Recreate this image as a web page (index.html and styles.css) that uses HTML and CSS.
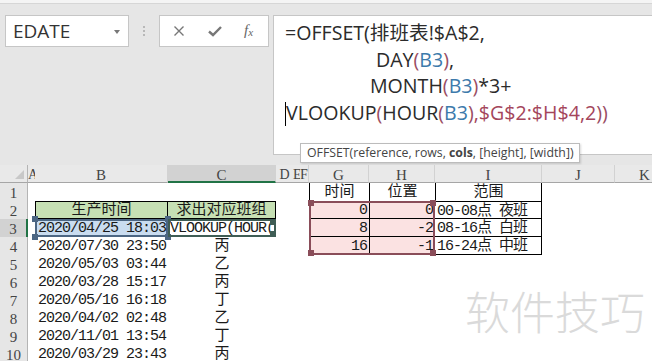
FILE: index.html
```html
<html>
<head>
    <link rel="stylesheet" href="styles.css">
</head>
<body>
    <div class="ribbon-edge"></div>
    <div class="bar">
        <div class="namebox">EDATE<span class="drop"></span></div>
        <div class="grip"><i></i><i></i><i></i></div>
        <div class="buttons">
            <svg class="btn" width="14" height="14" viewBox="0 0 14 14"><path d="M2.5 2.5 L11.5 11.5 M11.5 2.5 L2.5 11.5" stroke="#777" stroke-width="1.4" fill="none"/></svg>
            <svg class="btn" width="16" height="14" viewBox="0 0 16 14"><path d="M2 7.5 L6 11 L14 3" stroke="#777" stroke-width="2.4" fill="none"/></svg>
            <span class="fx">f<sub>x</sub></span>
        </div>
        <div class="formula">
            <div class="line">=OFFSET(排班表!$A$2,</div>
            <div class="line ind2">DAY<span class="tok-paren">(</span><span class="tok-cell">B3</span><span class="tok-paren">)</span>,</div>
            <div class="line ind3">MONTH<span class="tok-paren">(</span><span class="tok-cell">B3</span><span class="tok-paren">)</span>*3+</div>
            <div class="line"><span class="caret"></span>VLOOKUP<span class="tok-paren">(</span>HOUR<span class="tok-paren">(</span><span class="tok-cell">B3</span><span class="tok-paren">)</span><span class="tok-range">,$G$2:$H$4,2</span><span class="tok-paren">))</span></div>
        </div>
        <div class="tip">OFFSET(reference, rows, <b>cols</b>, [height], [width])</div>
    </div>

    <div class="sheet">
        <div class="row head">
            <div class="rh corner"><span class="tri"></span></div>
            <div class="hc a">A</div>
            <div class="hc b">B</div>
            <div class="hc c sel">C</div>
            <div class="hc d">D</div>
            <div class="hc e">E</div>
            <div class="hc f">F</div>
            <div class="hc g">G</div>
            <div class="hc h">H</div>
            <div class="hc i">I</div>
            <div class="hc j">J</div>
            <div class="hc k">K</div>
        </div>
        <div class="row">
            <div class="rh">1</div>
            <div class="a"></div><div class="b"></div><div class="c"></div>
            <div class="d"></div><div class="e"></div><div class="f"></div>
            <div class="g mid bl">时间</div>
            <div class="h mid bl">位置</div>
            <div class="i mid bl br">范围</div>
            <div class="j"></div><div class="k"></div>
        </div>
        <div class="row">
            <div class="rh">2</div>
            <div class="a"></div>
            <div class="b mid title box">生产时间</div>
            <div class="c mid title box nl">求出对应班组</div>
            <div class="d"></div><div class="e"></div><div class="f"></div>
            <div class="g pink num bb">0</div>
            <div class="h pink num bl bb">0</div>
            <div class="i band bt">00-08点 夜班</div>
            <div class="j"></div><div class="k"></div>
        </div>
        <div class="row">
            <div class="rh cur">3</div>
            <div class="a"></div>
            <div class="b ref-b">2020/04/25 18:03<span class="hd tl"></span><span class="hd tr"></span><span class="hd bl2"></span><span class="hd br2"></span></div>
            <div class="c edit">VLOOKUP(HOUR(<span class="hd tr"></span><span class="hd br2"></span></div>
            <div class="d"></div><div class="e"></div><div class="f"></div>
            <div class="g pink num bb">8</div>
            <div class="h pink num bl bb">-2</div>
            <div class="i band">08-16点 白班</div>
            <div class="j"></div><div class="k"></div>
        </div>
        <div class="row">
            <div class="rh">4</div>
            <div class="a"></div><div class="b">2020/07/30 23:50</div><div class="c mid">丙</div>
            <div class="d"></div><div class="e"></div><div class="f"></div>
            <div class="g pink num">16</div>
            <div class="h pink num bl">-1</div>
            <div class="i band">16-24点 中班</div>
            <div class="j"></div><div class="k"></div>
        </div>
        <div class="row"><div class="rh">5</div><div class="a"></div><div class="b">2020/05/03 03:44</div><div class="c mid">乙</div></div>
        <div class="row"><div class="rh">6</div><div class="a"></div><div class="b">2020/03/28 15:17</div><div class="c mid">丙</div></div>
        <div class="row"><div class="rh">7</div><div class="a"></div><div class="b">2020/05/16 16:18</div><div class="c mid">丁</div></div>
        <div class="row"><div class="rh">8</div><div class="a"></div><div class="b">2020/04/02 02:48</div><div class="c mid">乙</div></div>
        <div class="row"><div class="rh">9</div><div class="a"></div><div class="b">2020/11/01 13:54</div><div class="c mid">丁</div></div>
        <div class="row"><div class="rh">10</div><div class="a"></div><div class="b">2020/03/29 23:43</div><div class="c mid">丙</div></div>

        <div class="range"><span class="hd tl"></span><span class="hd tr"></span><span class="hd bl2"></span><span class="hd br2"></span></div>
        <div class="watermark">软件技巧</div>
    </div>
</body>
</html>
```

FILE: styles.css
```css
body {
    margin: 0;
    width: 652px;
    height: 361px;
    overflow: hidden;
    background-color: #e6e6e6;
    font-family: "Open Sans", "Noto Sans CJK SC", sans-serif;
    color: #262626;
}
.ribbon-edge {
    height: 3px;
    background-color: #f4f4f4;
    border-bottom: 1px solid #d6d6d6;
}
.bar {
    position: relative;
    display: flex;
    align-items: flex-start;
    height: 161px;
    padding-top: 11px;
    box-sizing: border-box;
}
.namebox {
    position: relative;
    width: 124px;
    height: 32px;
    margin-left: 5px;
    box-sizing: border-box;
    background-color: #fff;
    border: 1px solid #c6c6c6;
    padding-left: 7px;
    font-size: 19px;
    line-height: 30px;
    color: #333;
}
.drop {
    position: absolute;
    right: 8px;
    top: 14px;
    border-left: 3px solid transparent;
    border-right: 3px solid transparent;
    border-top: 4px solid #777;
}
.grip {
    width: 30px;
    height: 32px;
    display: flex;
    flex-direction: column;
    align-items: center;
    justify-content: center;
    gap: 2px;
}
.grip i {
    width: 2px;
    height: 2px;
    background-color: #b8b8b8;
}
.buttons {
    width: 110px;
    height: 32px;
    box-sizing: border-box;
    background-color: #fff;
    border: 1px solid #c6c6c6;
    display: flex;
    align-items: center;
    padding-left: 12px;
    gap: 21px;
}
.fx {
    font-family: "Liberation Serif", serif;
    font-style: italic;
    font-size: 15px;
    color: #666;
    line-height: 14px;
}
.fx sub {
    font-size: 11px;
    vertical-align: -1px;
}
.formula {
    flex: 1;
    height: 140px;
    margin-left: 4px;
    box-sizing: border-box;
    background-color: #fff;
    border: 1px solid #c6c6c6;
    border-right: none;
    padding: 4px 0 0 11px;
    font-size: 19.6px;
    line-height: 26.5px;
    white-space: nowrap;
    color: #2b2b2b;
}
.ind2 { padding-left: 91px; }
.ind3 { padding-left: 85px; }
.tok-paren { color: #9a4d63; }
.tok-cell { color: #3d7aab; }
.tok-range { color: #a4455b; }
.caret {
    display: inline-block;
    width: 1px;
    height: 24px;
    background-color: #000;
    vertical-align: -6px;
}
.tip {
    position: absolute;
    left: 300px;
    top: 139px;
    height: 20px;
    padding: 0 5px 0 6px;
    box-sizing: border-box;
    background-color: #fff;
    border: 1px solid #bcbcbc;
    box-shadow: 1px 1px 2px rgba(0, 0, 0, 0.15);
    font-size: 12.3px;
    line-height: 18px;
    color: #444;
    white-space: nowrap;
}

/* sheet grid */
.sheet {
    position: relative;
    height: 196px;
    background-color: #fff;
    font-family: "Liberation Mono", "Noto Sans CJK SC", monospace;
    font-size: 15px;
    color: #1a1a1a;
}
.row {
    display: flex;
    height: 18px;
}
.row > div {
    flex: none;
    height: 18px;
    box-sizing: border-box;
    line-height: 20px;
    white-space: nowrap;
    overflow: hidden;
}
.rh {
    width: 28px;
    background-color: #e6e6e6;
    border-right: 1px solid #b4b4b4;
    text-align: center;
    font-family: "Liberation Serif", serif;
    font-size: 15px;
    color: #444;
}
.rh.cur {
    background-color: #d2d2d2;
    border-right: 2px solid #217346;
}
.a { width: 7px; }
.b { width: 133px; padding-left: 3px; letter-spacing: -1px; }
.c { width: 108px; }
.d { width: 17px; }
.e { width: 7px; }
.f { width: 9px; }
.g { width: 60px; }
.h { width: 66px; }
.i { width: 107px; }
.j { width: 73px; }
.k { width: 60px; }

.row > .hc {
    background-color: #e9e9e9;
    border-right: 1px solid #d2d2d2;
    border-bottom: 1px solid #a6a6a6;
    text-align: center;
    font-family: "Liberation Serif", serif;
    font-size: 15px;
    color: #444;
    letter-spacing: 0;
    padding: 0;
    overflow: visible;
}
.row > .hc.a, .row > .hc.d, .row > .hc.e {
    border-right: none;
    font-size: 14px;
}
.row > .hc.f { font-size: 14px; }
.row > .hc.sel {
    background-color: #d2d2d2;
    border-bottom: 2px solid #217346;
}
.head .corner {
    position: relative;
    background-color: #e9e9e9;
    border-bottom: 1px solid #a6a6a6;
}
.tri {
    position: absolute;
    right: 3px;
    bottom: 3px;
    border-left: 9px solid transparent;
    border-bottom: 9px solid #c8c8c8;
}

.mid { text-align: center; }
.b.mid { padding-left: 0; letter-spacing: 0; }
.title { background-color: #c6e0b4; }
.row > .box { border: 1px solid #000; line-height: 17px; }
.row > .box.nl { border-left: none; }
.bl { border-left: 1px solid #000; }
.br { border-right: 1px solid #000; }
.bb { border-bottom: 1px solid #000; }
.bt { border-top: 1px solid #000; }
.pink { background-color: #fbe2e2; }
.num {
    text-align: right;
    padding-right: 2px;
    letter-spacing: -1px;
}
.band {
    border-right: 1px solid #000;
    border-bottom: 1px solid #000;
    padding-left: 2px;
    letter-spacing: -1px;
}
.row > .bt { line-height: 19px; }

.row > .ref-b { overflow: visible; position: relative; }
.ref-b {
    background-color: #c9dcf0;
    box-shadow: inset 0 0 0 2px #4c6683;
}
.row > .edit {
    position: relative;
    padding-left: 2px;
    letter-spacing: -1px;
    box-shadow: inset 0 0 0 2px #3f5d55;
}
.hd {
    position: absolute;
    width: 6px;
    height: 6px;
    background-color: #4c6683;
}
.edit .hd { background-color: #3f5d55; }
.range .hd { background-color: #8a4d59; }
.tl { left: -3px; top: -3px; }
.tr { right: -3px; top: -3px; }
.bl2 { left: -3px; bottom: -3px; }
.br2 { right: -3px; bottom: -3px; }
.edit .tr { right: 0; top: 0; }
.edit .br2 { right: 0; bottom: 0; }

.range {
    position: absolute;
    left: 309px;
    top: 36px;
    width: 126px;
    height: 54px;
    box-sizing: border-box;
    border: 2px solid #8a4d59;
}
.watermark {
    position: absolute;
    left: 465px;
    top: 123px;
    font-family: "Noto Sans CJK SC", sans-serif;
    font-size: 45px;
    font-weight: 300;
    line-height: 45px;
    color: #dadada;
}
```
